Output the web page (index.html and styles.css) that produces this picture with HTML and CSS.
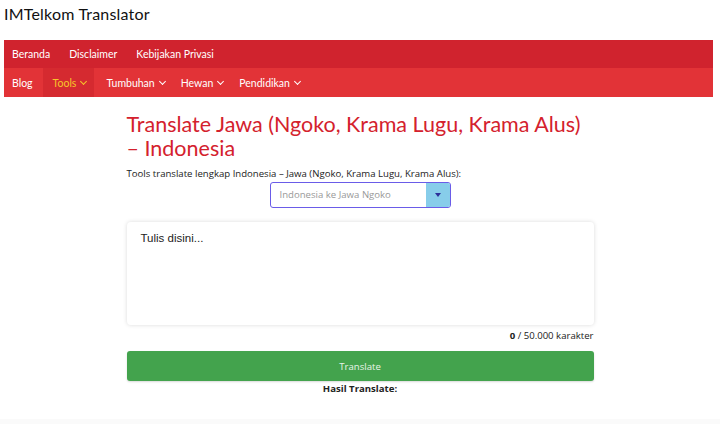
FILE: index.html
```html
<!DOCTYPE html>
<html lang="id">
<head>
    <meta charset="UTF-8">
    <meta name="viewport" content="width=device-width, initial-scale=1.0">
    <title>IMTelkom Translator</title>
    <link rel="stylesheet" href="styles.css">
</head>
<body>
    <header class="site-header">
        <div class="site-title">IMTelkom Translator</div>
    </header>

    <nav class="menu">
        <ul class="menu-top">
            <li>Beranda</li>
            <li>Disclaimer</li>
            <li>Kebijakan Privasi</li>
        </ul>
        <ul class="menu-main">
            <li>Blog</li>
            <li class="active">Tools <span class="caret"></span></li>
            <li>Tumbuhan <span class="caret"></span></li>
            <li>Hewan <span class="caret"></span></li>
            <li>Pendidikan <span class="caret"></span></li>
        </ul>
    </nav>

    <main class="content">
        <h1 class="page-title">Translate Jawa (Ngoko, Krama Lugu, Krama Alus) – Indonesia</h1>
        <p class="intro">Tools translate lengkap Indonesia – Jawa (Ngoko, Krama Lugu, Krama Alus):</p>
        <div class="select-wrap">
            <div class="select">
                <span class="select-text">Indonesia ke Jawa Ngoko</span>
                <span class="select-arrow"><span class="arrow-down"></span></span>
            </div>
        </div>
        <div class="input-card">
            <textarea class="input" placeholder="Tulis disini..."></textarea>
        </div>
        <div class="counter"><b>0</b> / 50.000 karakter</div>
        <button class="translate">Translate</button>
        <div class="result-label">Hasil Translate:</div>
    </main>

    <div class="footer-band"></div>
</body>
</html>
```

FILE: styles.css
```css
body {
    margin: 0;
    background-color: #fff;
    font-family: "Open Sans", sans-serif;
    color: #222;
}
.site-header {
    height: 40px;
    padding-left: 4px;
}
.site-title {
    font-family: Lato, sans-serif;
    font-size: 16px;
    padding-top: 4px;
    color: #111;
    letter-spacing: 0.2px;
}
.menu {
    margin: 0 7px 0 4px;
}
.menu ul {
    list-style: none;
    margin: 0;
    padding: 0 0 0 2px;
    display: flex;
    font-family: Lato, sans-serif;
    font-size: 10.5px;
    color: #fff;
}
.menu li {
    padding: 0 6px;
    display: flex;
    align-items: center;
}
.menu-top {
    background-color: #d0232e;
    height: 28px;
}
.menu-top li {
    margin-right: 7px;
}
.menu-main {
    background-color: #e23337;
    height: 29px;
}
.menu-main li {
    margin-right: 4px;
}
.menu-main li.active {
    background-color: #d52a30;
    color: #f7c52a;
    padding: 0 8px 0 10px;
    margin-right: 6px;
}
.caret {
    display: inline-block;
    width: 4px;
    height: 4px;
    border-right: 1px solid currentColor;
    border-bottom: 1px solid currentColor;
    transform: rotate(45deg);
    margin: -3px 0 0 5px;
}
.content {
    width: 467px;
    margin: 0 auto;
}
.page-title {
    font-family: Lato, sans-serif;
    font-weight: normal;
    color: #d4212d;
    font-size: 21.5px;
    line-height: 24px;
    margin: 15px 0 7px;
}
.intro {
    font-size: 9.6px;
    margin: 0 0 2px;
}
.select-wrap {
    display: flex;
    justify-content: center;
}
.select {
    width: 179px;
    height: 24px;
    border: 1px solid #6a5ce8;
    border-radius: 3px;
    display: flex;
    overflow: hidden;
}
.select-text {
    flex: 1;
    font-size: 9.6px;
    color: #999;
    padding-left: 9px;
    line-height: 24px;
}
.select-arrow {
    width: 24px;
    background-color: #87cdea;
    display: flex;
    align-items: center;
    justify-content: center;
}
.arrow-down {
    width: 0;
    height: 0;
    border-left: 3.5px solid transparent;
    border-right: 3.5px solid transparent;
    border-top: 4px solid #2c2f9a;
}
.input-card {
    margin-top: 14px;
    background: #fff;
    border-radius: 4px;
    box-shadow: 0 0 4px rgba(0, 0, 0, 0.15);
    height: 103px;
}
.input {
    width: 100%;
    height: 100%;
    box-sizing: border-box;
    border: none;
    resize: none;
    background: transparent;
    padding: 10px 14px;
    font-family: "Liberation Sans", Arial, sans-serif;
    font-size: 11.5px;
    outline: none;
}
.input::placeholder {
    color: #222;
}
.counter {
    text-align: right;
    font-size: 9.6px;
    margin-top: 4px;
}
.translate {
    display: block;
    width: 100%;
    height: 30px;
    margin-top: 9px;
    background-color: #43a34d;
    color: #e8f4e8;
    border: none;
    border-radius: 3px;
    font-family: "Open Sans", sans-serif;
    font-size: 9.6px;
    box-shadow: 0 1px 2px rgba(0, 0, 0, 0.15);
}
.result-label {
    text-align: center;
    font-weight: bold;
    font-size: 9.6px;
    margin-top: 1px;
}
.footer-band {
    position: absolute;
    left: 0;
    right: 0;
    top: 419px;
    height: 5px;
    background-color: #fafafa;
}
```
